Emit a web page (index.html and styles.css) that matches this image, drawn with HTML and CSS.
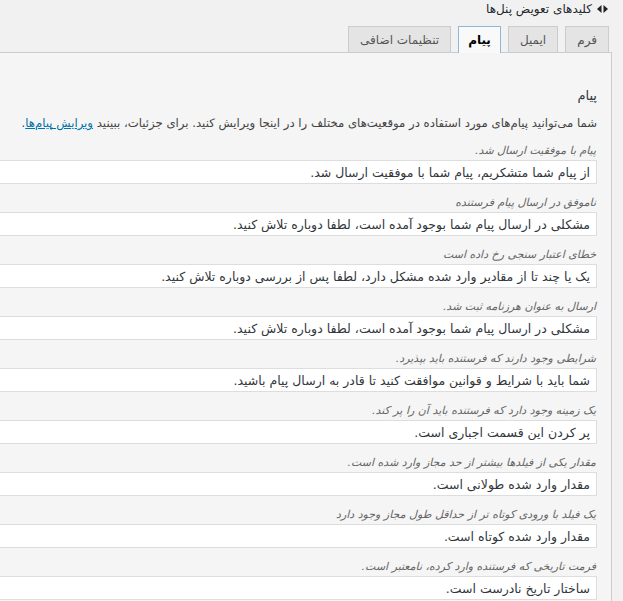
FILE: index.html
```html
<!DOCTYPE html>
<html lang="fa" dir="rtl">
<head>
<meta charset="utf-8">
<link rel="stylesheet" href="styles.css">
</head>
<body>
<div class="wrap">
  <div class="toggle">
    <svg class="toggle-icon" width="11" height="8" viewBox="0 0 11 8"><path d="M0 4 L4.5 0 L4.5 8 Z M11 4 L6.5 0 L6.5 8 Z" fill="#222"/></svg>
    <span>کلیدهای تعویض پنل‌ها</span>
  </div>
  <ul class="tabs">
    <li class="tab">فرم</li>
    <li class="tab">ایمیل</li>
    <li class="tab active">پیام</li>
    <li class="tab">تنظیمات اضافی</li>
  </ul>
  <div class="panel">
    <h2 class="panel-title">پیام</h2>
    <p class="desc">شما می‌توانید پیام‌های مورد استفاده در موقعیت‌های مختلف را در اینجا ویرایش کنید. برای جزئیات، ببینید <a href="#">ویرایش پیام‌ها</a>.</p>
    <div class="fields">
      <label class="field"><span class="field-label">پیام با موفقیت ارسال شد.</span><input class="field-input" type="text" value="از پیام شما متشکریم، پیام شما با موفقیت ارسال شد."></label>
      <label class="field"><span class="field-label">ناموفق در ارسال پیام فرستنده</span><input class="field-input" type="text" value="مشکلی در ارسال پیام شما بوجود آمده است، لطفا دوباره تلاش کنید."></label>
      <label class="field"><span class="field-label">خطای اعتبار سنجی رخ داده است</span><input class="field-input" type="text" value="یک یا چند تا از مقادیر وارد شده مشکل دارد، لطفا پس از بررسی دوباره تلاش کنید."></label>
      <label class="field"><span class="field-label">ارسال به عنوان هرزنامه ثبت شد.</span><input class="field-input" type="text" value="مشکلی در ارسال پیام شما بوجود آمده است، لطفا دوباره تلاش کنید."></label>
      <label class="field"><span class="field-label">شرایطی وجود دارند که فرستنده باید بپذیرد.</span><input class="field-input" type="text" value="شما باید با شرایط و قوانین موافقت کنید تا قادر به ارسال پیام باشید."></label>
      <label class="field"><span class="field-label">یک زمینه وجود دارد که فرستنده باید آن را پر کند.</span><input class="field-input" type="text" value="پر کردن این قسمت اجباری است."></label>
      <label class="field"><span class="field-label">مقدار یکی از فیلدها بیشتر از حد مجاز وارد شده است.</span><input class="field-input" type="text" value="مقدار وارد شده طولانی است."></label>
      <label class="field"><span class="field-label">یک فیلد با ورودی کوتاه تر از حداقل طول مجاز وجود دارد</span><input class="field-input" type="text" value="مقدار وارد شده کوتاه است."></label>
      <label class="field"><span class="field-label">فرمت تاریخی که فرستنده وارد کرده، نامعتبر است.</span><input class="field-input" type="text" value="ساختار تاریخ نادرست است."></label>
    </div>
  </div>
</div>
</body>
</html>
```

FILE: styles.css
```css
html, body {
  margin: 0;
  padding: 0;
  background: #f1f1f1;
  overflow: hidden;
}
body {
  font-family: "DejaVu Sans", sans-serif;
  font-size: 12px;
  color: #444;
  direction: rtl;
}
.wrap {
  margin-right: 11px;
  width: 720px;
}
.toggle {
  display: flex;
  align-items: center;
  gap: 5px;
  height: 18px;
  padding-right: 4px;
  color: #23282d;
  font-size: 12px;
}
.toggle-icon {
  display: block;
}
.tabs {
  list-style: none;
  margin: 8px 0 0;
  padding: 0 3px 0 0;
  display: flex;
  gap: 7px;
  align-items: flex-end;
}
.tab {
  height: 26px;
  box-sizing: border-box;
  padding: 0 11px;
  display: flex;
  align-items: center;
  background: #e4e4e4;
  border: 1px solid #ccc;
  border-bottom: none;
  color: #555;
  font-size: 12px;
}
.tab.active {
  background: #f9f9f9;
  border: 1px solid #8db6dc;
  border-bottom: none;
  color: #000;
  font-weight: bold;
  height: 27px;
  margin-bottom: -1px;
  padding: 0 9px;
  position: relative;
}
.panel {
  background: #f5f5f5;
  border: 1px solid #ccc;
  padding: 33px 14px 20px;
}
.panel-title {
  margin: 0;
  font-size: 13px;
  font-weight: normal;
  color: #32373c;
  line-height: 20px;
}
.desc {
  margin: 8px 0 0;
  line-height: 18px;
  color: #444;
  font-size: 11.7px;
}
.desc a {
  color: #0073aa;
  text-decoration: underline;
}
.fields {
  margin-top: 11px;
  display: flex;
  flex-direction: column;
  gap: 11px;
}
.field {
  display: flex;
  flex-direction: column;
  gap: 1px;
}
.field-label {
  font-style: italic;
  color: #666;
  font-size: 11px;
  line-height: 16px;
  padding-right: 1px;
}
.field-input {
  width: 100%;
  height: 24px;
  box-sizing: border-box;
  border: 1px solid #ddd;
  background: #fff;
  padding: 0 6px;
  margin: 0;
  font-family: "DejaVu Sans", sans-serif;
  font-size: 12.5px;
  color: #32373c;
  direction: rtl;
  outline: none;
}
```
